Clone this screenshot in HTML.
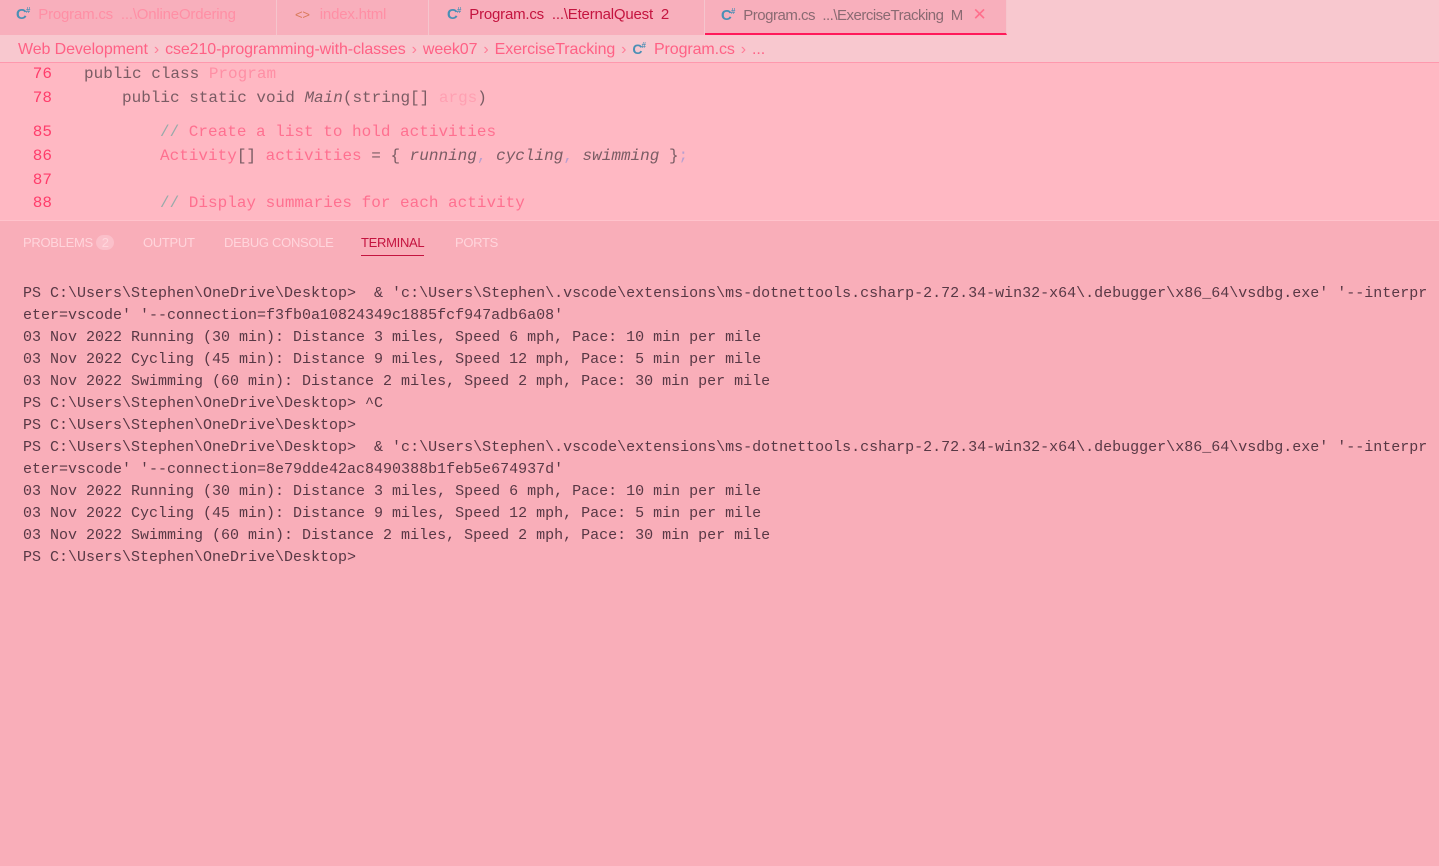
<!DOCTYPE html>
<html><head><meta charset="utf-8"><style>
*{margin:0;padding:0;box-sizing:border-box}
body{width:1439px;height:866px;overflow:hidden;background:#f9aeb9;font-family:"Liberation Sans",sans-serif;position:relative}
.tabs{position:absolute;top:0;left:0;width:1439px;height:35px;background:#f8c8cf}
.tab{position:absolute;top:0;height:35px;background:#f8afbc;border-right:1px solid #f5c5cd;font-size:15px;line-height:30px;color:#ff8fa5;white-space:nowrap;letter-spacing:-0.2px}
.cs{color:#4a8fb5;font-weight:bold;font-size:15px;margin-right:9px;letter-spacing:-1px}
.cs sup{font-size:8px;line-height:0;vertical-align:0;position:relative;top:-6px}
.crumbs{position:absolute;top:35px;left:0;width:1439px;height:28px;background:#f8c8cf;border-bottom:1px solid #ff98ad;font-size:16px;color:#ff6185;line-height:28px;padding-left:18px;white-space:nowrap;letter-spacing:-0.1px}
.crumbs .sep{color:#ff7e98;margin:0 6px}
.editor{position:absolute;top:63px;left:0;width:1439px;height:157px;background:#ffb8c3;font-family:"Liberation Mono",monospace;font-size:16px}
.ln{position:absolute;left:0;width:52px;text-align:right;color:#ff3d6b}
.code{position:absolute;white-space:pre;color:#7a5c64}
.panel{position:absolute;top:220px;left:0;width:1439px;height:646px;background:#f9aeb9;border-top:1px solid #ffc3cc}
.ptab{position:absolute;top:14px;font-size:13px;color:#ffd5dc;letter-spacing:-0.3px}
.term{position:absolute;top:62px;left:23px;font-family:"Liberation Mono",monospace;font-size:15px;line-height:22px;color:#583845;white-space:pre}
</style></head><body>
<div class="tabs">
 <div class="tab" style="left:0;width:277px;padding-left:16px"><span class="cs">C<sup>#</sup></span>Program.cs &nbsp;...\OnlineOrdering</div>
 <div class="tab" style="left:277px;width:152px;padding-left:18px"><span style="color:#d97a5a;font-size:13px;margin-right:10px">&lt;&gt;</span>index.html</div>
 <div class="tab" style="left:429px;width:276px;padding-left:18px;color:#c4143f"><span class="cs">C<sup>#</sup></span>Program.cs &nbsp;...\EternalQuest &nbsp;2</div>
 <div class="tab" style="left:705px;width:302px;padding-left:16px;color:#8a6a72;border-bottom:2px solid #ff1a5a;letter-spacing:-0.5px"><span class="cs">C<sup>#</sup></span>Program.cs &nbsp;...\ExerciseTracking &nbsp;M <span style="color:#ff6f8c;margin-left:6px;font-size:17px">✕</span></div>
</div>
<div class="crumbs">Web Development<span class="sep">›</span>cse210-programming-with-classes<span class="sep">›</span>week07<span class="sep">›</span>ExerciseTracking<span class="sep">›</span><span class="cs" style="font-size:14px">C<sup>#</sup></span>Program.cs<span class="sep">›</span>...</div>
<div class="editor">
 <div class="ln" style="top:2px">76</div><div class="code" style="top:2px;left:84px">public class <span style="color:#ff8fa5">Program</span></div>
 <div class="ln" style="top:26px">78</div><div class="code" style="top:26px;left:122px">public static void <i>Main</i>(string[] <span style="color:#ffa0b2">args</span>)</div>
 <div class="ln" style="top:60px">85</div><div class="code" style="top:60px;left:160px;color:#ff7090"><span style="color:#9aa">//</span> Create a list to hold activities</div>
 <div class="ln" style="top:84px">86</div><div class="code" style="top:84px;left:160px"><span style="color:#ff7090">Activity</span>[] <span style="color:#ff7090">activities</span> = { <i>running</i><span style="color:#b89fd0">,</span> <i>cycling</i><span style="color:#b89fd0">,</span> <i>swimming</i> }<span style="color:#b89fd0">;</span></div>
 <div class="ln" style="top:108px">87</div>
 <div class="ln" style="top:131px">88</div><div class="code" style="top:131px;left:160px;color:#ff7090"><span style="color:#9aa">//</span> Display summaries for each activity</div>
</div>
<div class="panel">
 <div class="ptab" style="left:23px">PROBLEMS <span style="display:inline-block;background:#fbc0ca;border-radius:9px;width:18px;text-align:center;color:#ffd5dc">2</span></div>
 <div class="ptab" style="left:143px">OUTPUT</div>
 <div class="ptab" style="left:224px">DEBUG CONSOLE</div>
 <div class="ptab" style="left:361px;color:#c4143f;border-bottom:1px solid #c4143f;padding-bottom:5px">TERMINAL</div>
 <div class="ptab" style="left:455px">PORTS</div>
 <div class="term">PS C:\Users\Stephen\OneDrive\Desktop>  &amp; 'c:\Users\Stephen\.vscode\extensions\ms-dotnettools.csharp-2.72.34-win32-x64\.debugger\x86_64\vsdbg.exe' '--interpr
eter=vscode' '--connection=f3fb0a10824349c1885fcf947adb6a08'
03 Nov 2022 Running (30 min): Distance 3 miles, Speed 6 mph, Pace: 10 min per mile
03 Nov 2022 Cycling (45 min): Distance 9 miles, Speed 12 mph, Pace: 5 min per mile
03 Nov 2022 Swimming (60 min): Distance 2 miles, Speed 2 mph, Pace: 30 min per mile
PS C:\Users\Stephen\OneDrive\Desktop> ^C
PS C:\Users\Stephen\OneDrive\Desktop>
PS C:\Users\Stephen\OneDrive\Desktop>  &amp; 'c:\Users\Stephen\.vscode\extensions\ms-dotnettools.csharp-2.72.34-win32-x64\.debugger\x86_64\vsdbg.exe' '--interpr
eter=vscode' '--connection=8e79dde42ac8490388b1feb5e674937d'
03 Nov 2022 Running (30 min): Distance 3 miles, Speed 6 mph, Pace: 10 min per mile
03 Nov 2022 Cycling (45 min): Distance 9 miles, Speed 12 mph, Pace: 5 min per mile
03 Nov 2022 Swimming (60 min): Distance 2 miles, Speed 2 mph, Pace: 30 min per mile
PS C:\Users\Stephen\OneDrive\Desktop></div>
</div>
</body></html>
